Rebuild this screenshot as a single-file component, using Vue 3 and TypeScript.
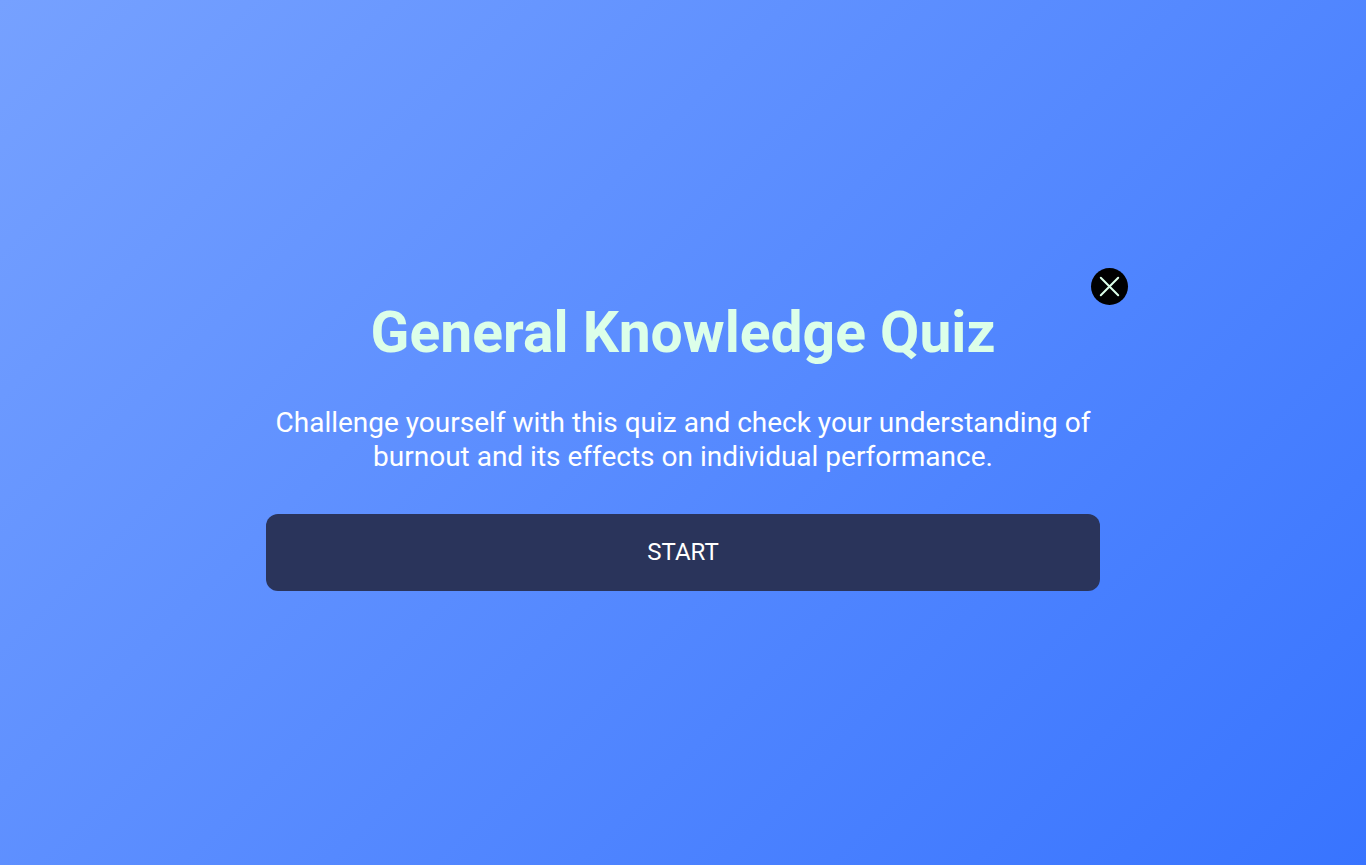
<script setup lang="ts">
import { ref } from 'vue'

const title = 'General Knowledge Quiz'
const description =
  'Challenge yourself with this quiz and check your understanding of burnout and its effects on individual performance.'
const open = ref<boolean>(true)
const started = ref<boolean>(false)
</script>

<template>
  <main class="page">
    <section v-if="open" class="quiz" aria-labelledby="quiz-title">
      <button class="close" type="button" aria-label="Close" @click="open = false">
        <svg viewBox="0 0 37 37" aria-hidden="true">
          <path d="M9.8 9.8 27.2 27.2M27.2 9.8 9.8 27.2" />
        </svg>
      </button>
      <h1 id="quiz-title" class="title">{{ title }}</h1>
      <p class="description">{{ description }}</p>
      <button class="start" type="button" :aria-pressed="started" @click="started = true">START</button>
    </section>
  </main>
</template>

<style>
body {
  margin: 0;
}
</style>

<style scoped>
.page {
  box-sizing: border-box;
  min-height: 100vh;
  display: flex;
  align-items: center;
  justify-content: center;
  background: linear-gradient(135deg, #76a1ff 0%, #3874ff 100%);
  font-family: Roboto, "Liberation Sans", sans-serif;
  text-align: center;
}

.quiz {
  position: relative;
  width: 61%;
  display: flex;
  flex-direction: column;
  padding-top: 20px;
}

.close {
  position: absolute;
  top: -7px;
  right: -28px;
  width: 37px;
  height: 37px;
  padding: 0;
  border: 0;
  border-radius: 50%;
  background: #000;
  cursor: pointer;
}

.close svg {
  display: block;
  width: 100%;
  height: 100%;
  fill: none;
  stroke: #dcffe9;
  stroke-width: 2;
  stroke-linecap: round;
}

.title {
  margin: 0;
  color: #dcffe9;
  font-size: 57px;
  font-weight: 700;
  line-height: 76px;
}

.description {
  margin: 35px 0 40px;
  color: #fff;
  font-size: 28px;
  line-height: 34px;
}

.start {
  height: 77px;
  border: 0;
  border-radius: 12px;
  background: #2a345b;
  color: #fff;
  font-family: inherit;
  font-size: 24px;
  cursor: pointer;
}
</style>
